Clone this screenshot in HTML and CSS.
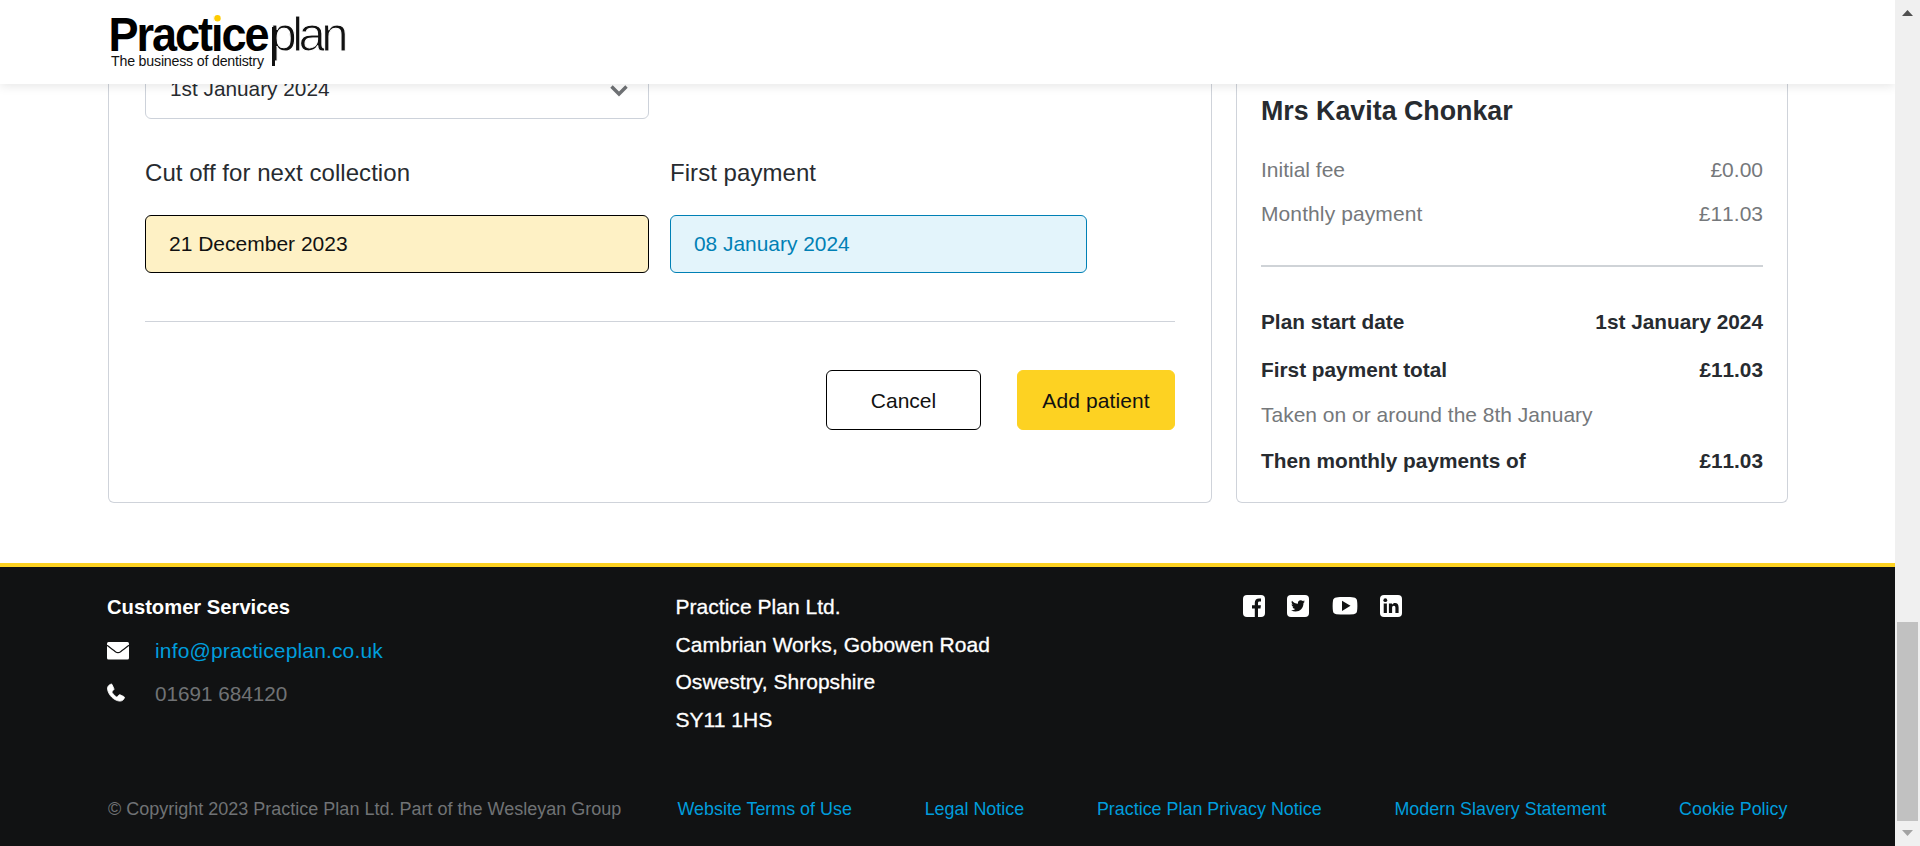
FILE: index.html
```html
<!DOCTYPE html>
<html lang="en">
<head>
<meta charset="utf-8">
<title>Practice Plan - Add patient</title>
<link rel="stylesheet" href="styles.css">
</head>
<body>
<div class="page">
  <header class="header">
    <svg class="logo" width="240" height="64" viewBox="0 0 240 64" role="img" aria-label="Practiceplan">
      <text class="logo-bold" transform="translate(0 43) scale(.92 1)" x="-0.500" y="0" textLength="175">Practice</text>
      <rect x="104.500" y="4" width="9" height="11.500" fill="#fff"/>
      <circle cx="108.500" cy="10.300" r="3.200" fill="#fecb00"/>
      <text class="logo-thin" x="160.500" y="43" textLength="79">plan</text>
      <rect x="163" y="19" width="3" height="39" fill="#111"/>
      <text class="logo-tag" x="2" y="58.300" textLength="153">The business of dentistry</text>
    </svg>
  </header>
  <main class="content">
    <section class="card form-card">
      <div class="select"><span>1st January 2024</span>
        <svg width="18" height="12" viewBox="0 0 18 12"><path d="M1.500 1.500 9 9l7.500-7.500" fill="none" stroke="#6f7275" stroke-width="3.400"/></svg>
      </div>
      <div class="dates">
        <div class="field cutoff"><label>Cut off for next collection</label><div class="box yellow">21 December 2023</div></div>
        <div class="field first"><label>First payment</label><div class="box blue">08 January 2024</div></div>
      </div>
      <hr class="rule">
      <div class="actions"><button class="btn cancel">Cancel</button><button class="btn add">Add patient</button></div>
    </section>
    <aside class="card summary">
      <h2>Mrs Kavita Chonkar</h2>
      <div class="row muted"><span>Initial fee</span><span class="amount">£0.00</span></div>
      <div class="row muted"><span class="monthly">Monthly payment</span><span class="amount">£11.03</span></div>
      <hr class="thick">
      <div class="row strong"><span>Plan start date</span><span class="amount">1st January 2024</span></div>
      <div class="row strong"><span>First payment total</span><span class="amount">£11.03</span></div>
      <div class="row muted note"><span>Taken on or around the 8th January</span></div>
      <div class="row strong"><span>Then monthly payments of</span><span class="amount">£11.03</span></div>
    </aside>
  </main>
  <footer class="footer">
    <div class="foot-top">
      <div class="services">
        <h3>Customer Services</h3>
        <div class="contact">
          <svg width="22" height="20" viewBox="0 0 22 20"><rect width="22" height="17.500" y="1" rx="1.500" fill="#fff"/><path d="M0 4.300c3 2.400 6 4.500 8.400 6.400 1.700 1.300 3.500 1.300 5.200 0C16 8.800 19 6.700 22 4.300" fill="none" stroke="#111213" stroke-width="1.200"/></svg>
          <a class="email">info@practiceplan.co.uk</a>
        </div>
        <div class="contact phone">
          <svg width="22" height="20" viewBox="0 0 22 20"><path d="M3.800 1.200C1.500 2.200.2 3.600.5 6.100c.9 6 6.300 11.200 11.800 12 2.600.2 4.300-1 5.100-3.300.2-.7-.1-1-.7-1.300l-3.600-1.700c-.6-.3-1-.1-1.400.4l-1.300 1.500c-.4.4-.8.400-1.200.1-1.600-1-3.200-2.700-4.100-4.300-.3-.5-.2-.9.2-1.300l1.200-1.100c.5-.4.600-.8.400-1.400L5.200 1.800c-.3-.7-.7-.9-1.400-.6Z" fill="#fff" stroke="#fff" stroke-width=".8"/></svg>
          <span>01691 684120</span>
        </div>
      </div>
      <address class="address">Practice Plan Ltd.<br>Cambrian Works, Gobowen Road<br>Oswestry, Shropshire<br>SY11 1HS</address>
      <div class="social">
        <svg width="22" height="22" viewBox="0 0 22 22"><rect width="22" height="22" rx="4" fill="#fff"/><path d="M11.800 22v-8.500H9v-3.300h2.800V7.800c0-2.900 1.700-4.400 4.300-4.400l1.900.2v2.900h-1.300c-1.400 0-1.700.7-1.700 1.700v2h2.900l-.4 3.300h-2.500V22Z" fill="#111213"/></svg>
        <svg width="22" height="22" viewBox="0 0 22 22"><rect width="22" height="22" rx="4" fill="#fff"/><path d="M18 6.600c-.5.200-1 .4-1.600.4.600-.3 1-.9 1.200-1.500-.6.300-1.100.5-1.800.6a2.900 2.900 0 0 0-4.900 2.600C8.600 8.600 6.500 7.500 5 5.700c-.8 1.300-.4 3 .9 3.800-.5 0-.9-.1-1.300-.3 0 1.400 1 2.500 2.300 2.800-.4.100-.9.100-1.300 0 .4 1.200 1.400 2 2.700 2A5.800 5.800 0 0 1 4 15.200c5.700 3.400 12.600-.1 12.500-7.200.6-.4 1.100-.8 1.500-1.400Z" fill="#111213"/></svg>
        <svg class="youtube" width="26" height="22" viewBox="0 0 26 22"><path d="M13 2c3.700 0 6.900.1 8.700.4 1.900.2 3 1.300 3.300 3 .5 3.300.5 7.500 0 10.900-.3 1.700-1.400 2.700-3.300 2.900-5.300.5-12.100.5-17.400 0-1.900-.2-3-1.200-3.300-2.900-.5-3.400-.5-7.600 0-10.900.3-1.700 1.400-2.800 3.300-3C6.100 2.100 9.300 2 13 2Z" fill="#fff"/><path d="m10 5.800 8.500 5-8.500 5.100Z" fill="#111213"/></svg>
        <svg width="22" height="22" viewBox="0 0 22 22"><rect width="22" height="22" rx="4" fill="#fff"/><circle cx="5.300" cy="5.200" r="1.900" fill="#111213"/><path d="M3.700 8.400h3.200V18H3.700ZM8.900 8.400H12v1.400c.7-1.100 1.800-1.700 3.100-1.700 2.200 0 3.500 1.500 3.500 4.300V18h-3.200v-5.200c0-1.300-.5-2-1.500-2-1.200 0-1.800.9-1.800 2.200v5H8.900Z" fill="#111213"/></svg>
      </div>
    </div>
    <div class="foot-bottom">
      <span class="copyright">© Copyright 2023 Practice Plan Ltd. Part of the Wesleyan Group</span>
      <nav class="links"><a>Website Terms of Use</a><a>Legal Notice</a><a>Practice Plan Privacy Notice</a><a>Modern Slavery Statement</a><a>Cookie Policy</a></nav>
    </div>
  </footer>
</div>
<div class="scrollbar">
  <svg width="11" height="6" viewBox="0 0 11 6"><path d="M5.500 0 11 6H0Z" fill="#505050"/></svg>
  <div class="thumb"></div>
  <svg class="down" width="11" height="6" viewBox="0 0 11 6"><path d="M0 0h11L5.500 6Z" fill="#a3a3a3"/></svg>
</div>
</body>
</html>
```
FILE: styles.css
```css
* { box-sizing: border-box; }
body {
  margin: 0;
  width: 1920px;
  height: 846px;
  overflow: hidden;
  display: flex;
  background: #fff;
  color: #272b30;
  font: 21px/30px "Liberation Sans", Arial, sans-serif;
}
.page { width: 1895px; height: 846px; display: flex; flex-direction: column; overflow: hidden; }
.header {
  position: relative;
  z-index: 2;
  flex: none;
  height: 84px;
  padding: 8px 0 0 109px;
  background: #fff;
  box-shadow: 0 2px 10px rgba(0, 0, 0, .1);
}
.logo { display: block; }
.logo-bold { font-size: 49px; font-weight: 700; fill: #000; }
.logo-thin { font-size: 49px; fill: #111; stroke: #fff; stroke-width: 1px; }
.logo-tag { font-size: 14.2px; fill: #111; }

.content { flex: none; display: flex; gap: 24px; height: 503px; margin-top: -24px; padding: 0 0 60px 108px; }
.card { height: 443px; border: 1px solid #cfd3da; border-top: 0; border-radius: 0 0 6px 6px; }
.form-card { width: 1104px; padding: 1px 36px 0; }
.select {
  width: 504px;
  height: 58px;
  padding: 0 20px 2px 24px;
  border: 1px solid #cdd2da;
  border-radius: 6px;
  display: flex;
  align-items: center;
  justify-content: space-between;
  font-size: 20.8px;
}
.select svg { margin-top: 4px; }
.dates { display: flex; gap: 21px; margin-top: 39px; }
.field label { display: block; height: 57px; font-size: 24px; letter-spacing: .05px; }
.cutoff { width: 504px; }
.first { width: 417px; }
.box { height: 58px; padding-left: 23px; border: 1px solid; border-radius: 6px; line-height: 55px; }
.yellow { background: #fef1c5; border-color: #000; color: #111; }
.blue { background: #e3f4fb; border-color: #0080b5; color: #0080b5; font-size: 20.9px; }
.rule { margin: 48px 0; border: 0; height: 1px; background: #cfd3da; }
.actions { display: flex; justify-content: flex-end; gap: 36px; }
.btn { height: 60px; padding: 1px 0 0; border: 1px solid #000; border-radius: 6px; font: inherit; color: #111; background: #fff; }
.cancel { width: 155px; }
.add { width: 158px; border-color: #fdd222; background: #fdd222; letter-spacing: .1px; }

.summary { width: 552px; padding: 36px 24px 0; }
.summary h2 { margin: 0 0 29px; font-size: 26.8px; line-height: 30px; font-weight: 700; }
.row { display: flex; justify-content: space-between; height: 30px; }
.row + .row { margin-top: 14px; }
.muted { color: #75787b; }
.strong { font-size: 20.8px; font-weight: 700; }
.amount { font-kerning: none; }
.monthly { letter-spacing: .1px; }
.thick { border: 0; height: 2px; margin: 36px 0 40px; background: #cfd3d7; }
.row.strong + .row.strong { margin-top: 18px; }
.row + .row.note { margin-top: 15px; }
.row.note + .row { margin-top: 16px; }

.footer { flex: 1; border-top: 4px solid #fdd222; background: #111213; }
.foot-top { display: flex; height: 207px; padding: 25px 0 0 107px; }
.services { width: 568.5px; }
.services h3 { margin: 0 0 14px; font-size: 20.2px; line-height: 30px; color: #fff; }
.contact { display: flex; align-items: center; gap: 26px; height: 30px; color: #009ddc; }
.email { letter-spacing: .15px; }
.phone { margin-top: 13px; font-size: 20.7px; color: #707275; }
.phone svg { margin-top: -3px; }
.address { width: 567px; font-style: normal; line-height: 37.6px; letter-spacing: .03px; margin-top: -4px; color: #fff; -webkit-text-stroke: .3px #fff; }
.social { display: flex; gap: 22px; height: 22px; margin-top: 3px; }
.social .youtube { margin: 0 0 0 1px; }
.foot-bottom { display: flex; justify-content: space-between; padding: 20px 107.5px 0 108px; font-size: 18px; color: #707275; }
.links { width: 1110px; display: flex; justify-content: space-between; font-size: 17.9px; color: #009ddc; }

.scrollbar { width: 25px; height: 846px; padding-top: 10px; background: #f0f0f0; display: flex; flex-direction: column; align-items: center; }
.thumb { width: 21px; height: 199px; margin-top: 606px; background: #c1c1c1; }
.down { margin-top: 9px; }
```
